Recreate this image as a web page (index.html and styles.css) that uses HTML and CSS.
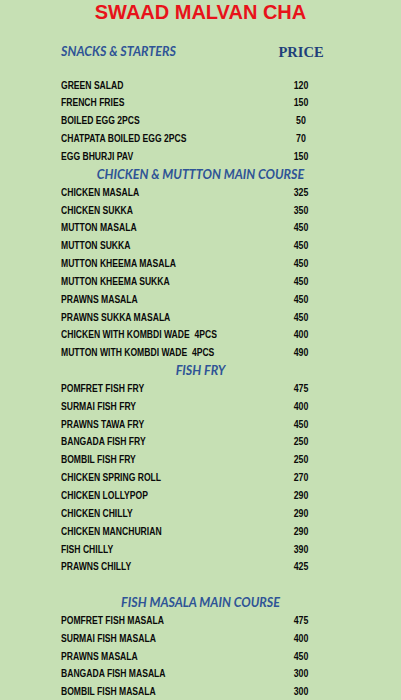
FILE: index.html
```html
<!DOCTYPE html>
<html>
<head>
<meta charset="utf-8">
<link rel="stylesheet" href="styles.css">
</head>
<body>
<div class="page">
  <h1 class="title">SWAAD MALVAN CHA</h1>
  <div class="menu">
    <div class="head-row">
      <div class="sec sec-left">SNACKS &amp; STARTERS</div>
      <div class="price-head">PRICE</div>
    </div>
    <div class="blank"></div>
    <div class="row"><span class="name">GREEN SALAD</span><span class="price">120</span></div>
    <div class="row"><span class="name">FRENCH FRIES</span><span class="price">150</span></div>
    <div class="row"><span class="name">BOILED EGG 2PCS</span><span class="price">50</span></div>
    <div class="row"><span class="name">CHATPATA BOILED EGG 2PCS</span><span class="price">70</span></div>
    <div class="row"><span class="name">EGG BHURJI PAV</span><span class="price">150</span></div>
    <div class="sec sec-center">CHICKEN &amp; MUTTTON MAIN COURSE</div>
    <div class="row"><span class="name">CHICKEN MASALA</span><span class="price">325</span></div>
    <div class="row"><span class="name">CHICKEN SUKKA</span><span class="price">350</span></div>
    <div class="row"><span class="name">MUTTON MASALA</span><span class="price">450</span></div>
    <div class="row"><span class="name">MUTTON SUKKA</span><span class="price">450</span></div>
    <div class="row"><span class="name">MUTTON KHEEMA MASALA</span><span class="price">450</span></div>
    <div class="row"><span class="name">MUTTON KHEEMA SUKKA</span><span class="price">450</span></div>
    <div class="row"><span class="name">PRAWNS MASALA</span><span class="price">450</span></div>
    <div class="row"><span class="name">PRAWNS SUKKA MASALA</span><span class="price">450</span></div>
    <div class="row"><span class="name">CHICKEN WITH KOMBDI WADE&nbsp; 4PCS</span><span class="price">400</span></div>
    <div class="row"><span class="name">MUTTON WITH KOMBDI WADE&nbsp; 4PCS</span><span class="price">490</span></div>
    <div class="sec sec-center">FISH FRY</div>
    <div class="row"><span class="name">POMFRET FISH FRY</span><span class="price">475</span></div>
    <div class="row"><span class="name">SURMAI FISH FRY</span><span class="price">400</span></div>
    <div class="row"><span class="name">PRAWNS TAWA FRY</span><span class="price">450</span></div>
    <div class="row"><span class="name">BANGADA FISH FRY</span><span class="price">250</span></div>
    <div class="row"><span class="name">BOMBIL FISH FRY</span><span class="price">250</span></div>
    <div class="row"><span class="name">CHICKEN SPRING ROLL</span><span class="price">270</span></div>
    <div class="row"><span class="name">CHICKEN LOLLYPOP</span><span class="price">290</span></div>
    <div class="row"><span class="name">CHICKEN CHILLY</span><span class="price">290</span></div>
    <div class="row"><span class="name">CHICKEN MANCHURIAN</span><span class="price">290</span></div>
    <div class="row"><span class="name">FISH CHILLY</span><span class="price">390</span></div>
    <div class="row"><span class="name">PRAWNS CHILLY</span><span class="price">425</span></div>
    <div class="blank"></div>
    <div class="sec sec-center">FISH MASALA MAIN COURSE</div>
    <div class="row"><span class="name">POMFRET FISH MASALA</span><span class="price">475</span></div>
    <div class="row"><span class="name">SURMAI FISH MASALA</span><span class="price">400</span></div>
    <div class="row"><span class="name">PRAWNS MASALA</span><span class="price">450</span></div>
    <div class="row"><span class="name">BANGADA FISH MASALA</span><span class="price">300</span></div>
    <div class="row"><span class="name">BOMBIL FISH MASALA</span><span class="price">300</span></div>
  </div>
</div>
</body>
</html>
```
FILE: styles.css
```css
html, body {
  margin: 0;
  padding: 0;
  background: #c6e0b4;
}
.page {
  width: 401px;
  height: 700px;
  overflow: hidden;
  background: #c6e0b4;
}
.title {
  margin: 0;
  padding-top: 1px;
  height: 39px;
  text-align: center;
  font-family: "Liberation Sans", Arial, sans-serif;
  font-weight: bold;
  font-size: 20px;
  line-height: 22px;
  color: #e8121a;
}
.menu {
  margin-left: 61px;
  width: 280px;
}
.head-row {
  display: grid;
  grid-template-columns: 1fr 80px;
  align-items: center;
  height: 17.85px;
}
.sec {
  box-sizing: border-box;
  font-family: Lato, "Open Sans", sans-serif;
  font-style: italic;
  font-weight: bold;
  font-size: 12.5px;
  color: #2f5496;
  height: 17.85px;
  padding-top: 2px;
  line-height: 15.85px;
  white-space: nowrap;
}
.sec-center {
  text-align: center;
  margin-left: -61px;
  width: 401px;
}
.price-head {
  font-family: "Liberation Serif", "Times New Roman", serif;
  font-weight: bold;
  font-size: 14.5px;
  color: #1f3f7a;
  text-align: center;
  margin-top: 4px;
}
.blank {
  height: 17.85px;
}
.row {
  display: grid;
  grid-template-columns: 1fr 80px;
  align-items: center;
  height: 17.85px;
  font-family: "Liberation Sans", Arial, sans-serif;
  font-weight: bold;
  font-size: 11px;
  color: #0a0a0a;
  white-space: nowrap;
}
.name {
  display: inline-block;
  transform: scaleX(0.78);
  transform-origin: left center;
}
.price {
  display: inline-block;
  text-align: center;
  transform: scaleX(0.8);
  transform-origin: center center;
}
```
